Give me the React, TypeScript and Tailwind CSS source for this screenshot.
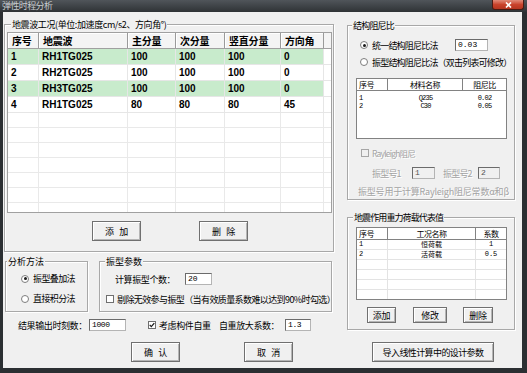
import React from "react";

const F = "font-['Noto_Sans_CJK_SC','Noto_Sans',sans-serif]";

function Radio({ checked = false }: { checked?: boolean }) {
  return (
    <span className="flex h-[8px] w-[8px] shrink-0 items-center justify-center rounded-full border border-[#7d7d7d] bg-white">
      {checked && <span className="h-[3px] w-[3px] rounded-full bg-[#1a1a1a]" />}
    </span>
  );
}

function Check({ checked = false, disabled = false }: { checked?: boolean; disabled?: boolean }) {
  return (
    <span
      className={`flex h-[8px] w-[8px] shrink-0 items-center justify-center border ${
        disabled ? "border-[#a6a6a6] bg-[#f0f0f0]" : "border-[#6f6f6f] bg-white"
      }`}
    >
      {checked && (
        <svg width="6" height="6" viewBox="0 0 6 6">
          <path d="M0.7 2.9 L2.3 4.6 L5.3 1.1" fill="none" stroke="#1a1a1a" strokeWidth="1.3" />
        </svg>
      )}
    </span>
  );
}

function Field({ value, className = "", disabled = false }: { value: string; className?: string; disabled?: boolean }) {
  return (
    <div
      className={`flex shrink-0 items-center border border-[#b4b4b4] border-l-[#6b6b6b] border-t-[#6b6b6b] pl-[2px] font-['Liberation_Mono',monospace] text-[8px] leading-none ${
        disabled ? "bg-[#f0f0f0] text-[#555]" : "bg-white text-black"
      } ${className}`}
    >
      {value}
    </div>
  );
}

function Btn({ children, className = "" }: { children: React.ReactNode; className?: string }) {
  return (
    <button
      type="button"
      className={`flex shrink-0 items-center justify-center border border-[#707070] bg-[#f0f0f0] text-[9px] leading-none tracking-[-0.3px] text-black [word-spacing:4px] shadow-[inset_1px_1px_0_#ffffff,inset_-1px_-1px_0_#b5b5b5] ${className}`}
    >
      {children}
    </button>
  );
}

function Group({
  label,
  labelClass = "",
  className = "",
  children,
}: {
  label: string;
  labelClass?: string;
  className?: string;
  children?: React.ReactNode;
}) {
  return (
    <div className={`relative shrink-0 border border-[#a8a8a8] shadow-[inset_1px_1px_0_#ffffff,1px_1px_0_#ffffff] ${className}`}>
      <span
        className={`absolute -top-[6px] whitespace-nowrap bg-[#f0f0f0] px-[1px] text-[9px] leading-[11px] text-black ${labelClass}`}
      >
        {label}
      </span>
      {children}
    </div>
  );
}

const colW = ["w-[31px]", "w-[89px]", "w-[48px]", "w-[49px]", "w-[56px]", "w-[43px]"];
const headers = ["序号", "地震波", "主分量", "次分量", "竖直分量", "方向角"];
const rows: { cells: string[]; green: boolean }[] = [
  { cells: ["1", "RH1TG025", "100", "100", "100", "0"], green: true },
  { cells: ["2", "RH2TG025", "100", "100", "100", "0"], green: false },
  { cells: ["3", "RH3TG025", "100", "100", "100", "0"], green: true },
  { cells: ["4", "RH1TG025", "80", "80", "80", "45"], green: false },
];

function WaveTable() {
  return (
    <div className="flex h-[181px] w-[325px] flex-col overflow-hidden border border-[#a0a0a0] bg-white">
      <div className="flex h-[16px] shrink-0 border-b border-[#a0a0a0]">
        {headers.map((h, i) => (
          <div
            key={h}
            className={`${colW[i]} flex shrink-0 items-center border-r border-[#9a9a9a] bg-[#f4f4f4] pl-[4px] text-[10px] font-bold leading-none tracking-[-0.2px] shadow-[inset_1px_1px_0_#ffffff]`}
          >
            {h}
          </div>
        ))}
        <div className="flex-1 bg-[#f4f4f4]" />
      </div>
      {rows.map((r, ri) => (
        <div key={ri} className="flex h-[16px] shrink-0 border-b border-[#e6e6e6]">
          {r.cells.map((c, i) => (
            <div
              key={i}
              className={`${colW[i]} flex shrink-0 items-center border-r border-[#e6e6e6] pl-[3px] font-['Liberation_Sans',sans-serif] text-[10px] font-bold leading-none ${
                r.green ? "bg-[#c8ebcc]" : "bg-white"
              }`}
            >
              {c}
            </div>
          ))}
          <div className="flex-1 bg-white" />
        </div>
      ))}
      {Array.from({ length: 7 }).map((_, ri) => (
        <div key={"e" + ri} className="flex h-[15px] shrink-0 border-b border-[#e9e9e9]">
          {colW.map((w, i) => (
            <div key={i} className={`${w} shrink-0 border-r border-[#e9e9e9]`} />
          ))}
          <div className="flex-1" />
        </div>
      ))}
    </div>
  );
}

function DampList() {
  return (
    <div className="ml-[8px] mt-[10px] h-[61px] w-[151px] shrink-0 overflow-hidden border border-[#828282] bg-white">
      <div className="flex h-[12px] border-b border-[#828282] text-[8px] leading-none tracking-[-0.5px]">
        <div className="flex w-[31px] shrink-0 items-center border-r border-[#828282] pl-[2px]">序号</div>
        <div className="flex w-[75px] shrink-0 items-center justify-center border-r border-[#828282]">材料名称</div>
        <div className="flex flex-1 items-center justify-center">阻尼比</div>
      </div>
      <div className="pt-[3px] font-['Liberation_Mono',monospace] text-[7px] leading-none">
        {[
          ["1", "Q235", "0.02"],
          ["2", "C30", "0.05"],
        ].map((r) => (
          <div key={r[0]} className="flex h-[8px] items-center">
            <div className="w-[31px] shrink-0 pl-[2px]">{r[0]}</div>
            <div className="w-[75px] shrink-0 text-center">{r[1]}</div>
            <div className="flex-1 text-center">{r[2]}</div>
          </div>
        ))}
      </div>
    </div>
  );
}

function LoadList() {
  const data = [
    ["1", "恒荷载", "1"],
    ["2", "活荷载", "0.5"],
    ["", "", ""],
    ["", "", ""],
    ["", "", ""],
    ["", "", ""],
    ["", "", ""],
  ];
  return (
    <div className="ml-[8px] mt-[9px] h-[73px] w-[151px] shrink-0 overflow-hidden border border-[#828282] bg-white">
      <div className="flex h-[12px] border-b border-[#828282] text-[8px] leading-none tracking-[-0.5px]">
        <div className="flex w-[31px] shrink-0 items-center border-r border-[#828282] pl-[2px]">序号</div>
        <div className="flex w-[88px] shrink-0 items-center justify-center border-r border-[#828282]">工况名称</div>
        <div className="flex flex-1 items-center justify-center">系数</div>
      </div>
      {data.map((r, i) => (
        <div key={i} className="flex h-[10px] border-b border-[#e3e3e3] leading-none">
          <div className="flex w-[31px] shrink-0 items-center border-r border-[#e3e3e3] pl-[2px] font-['Liberation_Mono',monospace] text-[7px]">
            {r[0]}
          </div>
          <div className="flex w-[88px] shrink-0 items-center justify-center border-r border-[#e3e3e3] text-[7px]">
            {r[1]}
          </div>
          <div className="flex flex-1 items-center justify-center font-['Liberation_Mono',monospace] text-[7px]">{r[2]}</div>
        </div>
      ))}
    </div>
  );
}

const dis = "text-[#a3a3a3] [text-shadow:1px_1px_0_#ffffff]";

export default function App() {
  return (
    <div className={`flex h-[373px] w-[527px] flex-col overflow-hidden bg-[#2b2f32] text-black ${F}`}>
      {/* title bar */}
      <div className="flex h-[12px] shrink-0 items-start justify-between bg-gradient-to-b from-[#50555a] to-[#2f3336]">
        <span className="pl-[2px] text-[9px] leading-[11px] tracking-[-0.6px] text-[#c9cdd1]">弹性时程分析</span>
        <div className="mr-[3px] flex h-[10px] w-[32px] items-center justify-center rounded-b-[3px] border border-t-0 border-[#4a1a12] bg-gradient-to-b from-[#e08a78] via-[#c9432c] to-[#b5351f]">
          <svg width="7" height="6" viewBox="0 0 7 6">
            <path d="M1 0.5 L6 5.5 M6 0.5 L1 5.5" stroke="#ffffff" strokeWidth="1.6" />
          </svg>
        </div>
      </div>

      {/* client */}
      <div className="mb-[5px] ml-[3px] mr-[5px] flex flex-1 items-start bg-[#f0f0f0]">
        {/* left column */}
        <div className="ml-[1px] flex w-[330px] shrink-0 flex-col">
          <Group
            label="地震波工况(单位:加速度cm/s2、方向角°)"
            labelClass="left-[6px] tracking-[-0.4px]"
            className="mt-[12px] h-[228px] w-[330px] pl-[2px] pt-[7px]"
          >
            <WaveTable />
            <div className="mt-[8px] flex gap-[58px] pl-[85px]">
              <Btn className="h-[20px] w-[49px]">添 加</Btn>
              <Btn className="h-[20px] w-[49px]">删 除</Btn>
            </div>
          </Group>

          <div className="mt-[9px] flex">
            <Group label="分析方法" labelClass="left-[1px]" className="ml-[1px] h-[51px] w-[83px]">
              <div className="flex flex-col gap-[9px] pl-[15px] pt-[11px] text-[9px] leading-none tracking-[-0.6px]">
                <div className="flex h-[11px] items-center gap-[4px]">
                  <Radio checked />
                  振型叠加法
                </div>
                <div className="flex h-[11px] items-center gap-[4px]">
                  <Radio />
                  直接积分法
                </div>
              </div>
            </Group>
            <Group label="振型参数" labelClass="left-[5px]" className="ml-[11px] h-[51px] w-[233px]">
              <div className="flex flex-col text-[9px] leading-none">
                <div className="mt-[11px] flex h-[12px] items-center pl-[15px]">
                  <span className="w-[70px] tracking-[-0.4px]">计算振型个数：</span>
                  <Field value="20" className="h-[12px] w-[27px]" />
                </div>
                <div className="mt-[8px] flex h-[12px] items-center gap-[3px] pl-[6px] tracking-[-0.6px]">
                  <Check />
                  <span className="whitespace-nowrap">剔除无效参与振型（当有效质量系数难以达到90%时勾选）</span>
                </div>
              </div>
            </Group>
          </div>

          <div className="mt-[7px] flex h-[12px] items-center pl-[14px] text-[9px] leading-none tracking-[-0.4px]">
            <span className="w-[71px] shrink-0">结果输出时刻数：</span>
            <Field value="1000" className="h-[12px] w-[37px]" />
            <span className="ml-[22px]">
              <Check checked />
            </span>
            <span className="ml-[3px] w-[60px] shrink-0">考虑构件自重</span>
            <span className="w-[66px] shrink-0">自重放大系数：</span>
            <Field value="1.3" className="h-[12px] w-[26px]" />
          </div>

          <div className="mt-[11px] flex gap-[64px] pl-[127px]">
            <Btn className="h-[20px] w-[49px]">确 认</Btn>
            <Btn className="h-[20px] w-[49px]">取 消</Btn>
          </div>
        </div>

        {/* right column */}
        <div className="ml-[13px] flex w-[168px] shrink-0 flex-col">
          <Group label="结构阻尼比" labelClass="left-[4px] tracking-[-0.8px]" className="mt-[13px] h-[175px] w-[168px]">
            <div className="flex flex-col text-[9px] leading-none tracking-[-0.8px]">
              <div className="mt-[13px] flex h-[12px] items-center pl-[12px]">
                <Radio checked />
                <span className="ml-[4px] w-[83px] shrink-0">统一结构阻尼比法</span>
                <Field value="0.03" className="h-[12px] w-[33px] tracking-normal" />
              </div>
              <div className="mt-[5px] flex h-[12px] items-center gap-[4px] pl-[12px]">
                <Radio />
                <span className="whitespace-nowrap">振型结构阻尼比法（双击列表可修改）</span>
              </div>
              <DampList />
              <div className="ml-[13px] mt-[9px] flex h-[10px] items-center gap-[3px]">
                <Check disabled />
                <span className={`${dis} text-[8.5px]`}>Rayleigh阻尼</span>
              </div>
              <div className="mt-[9px] flex h-[12px] items-center pl-[24px]">
                <span className={`${dis} w-[40px] shrink-0`}>振型号1</span>
                <Field value="1" disabled className="h-[12px] w-[23px]" />
                <span className={`${dis} ml-[8px] w-[35px] shrink-0`}>振型号2</span>
                <Field value="2" disabled className="h-[12px] w-[22px]" />
              </div>
              <div
                className={`${dis} mt-[7px] flex h-[10px] items-center whitespace-nowrap pl-[10px] text-[9px] tracking-[-0.2px]`}
              >
                振型号用于计算Rayleigh阻尼常数α和β
              </div>
            </div>
          </Group>

          <Group
            label="地震作用重力荷载代表值"
            labelClass="left-[5px] tracking-[-0.9px]"
            className="mt-[17px] h-[113px] w-[168px]"
          >
            <div className="flex flex-col">
              <LoadList />
              <div className="mt-[7px] flex pl-[19px]">
                <Btn className="h-[16px] w-[29px]">添加</Btn>
                <Btn className="ml-[17px] h-[16px] w-[34px]">修改</Btn>
                <Btn className="ml-[16px] h-[16px] w-[30px]">删除</Btn>
              </div>
            </div>
          </Group>

          <Btn className="ml-[25px] mt-[12px] h-[20px] w-[122px] tracking-[-0.6px]">导入线性计算中的设计参数</Btn>
        </div>
      </div>
    </div>
  );
}
